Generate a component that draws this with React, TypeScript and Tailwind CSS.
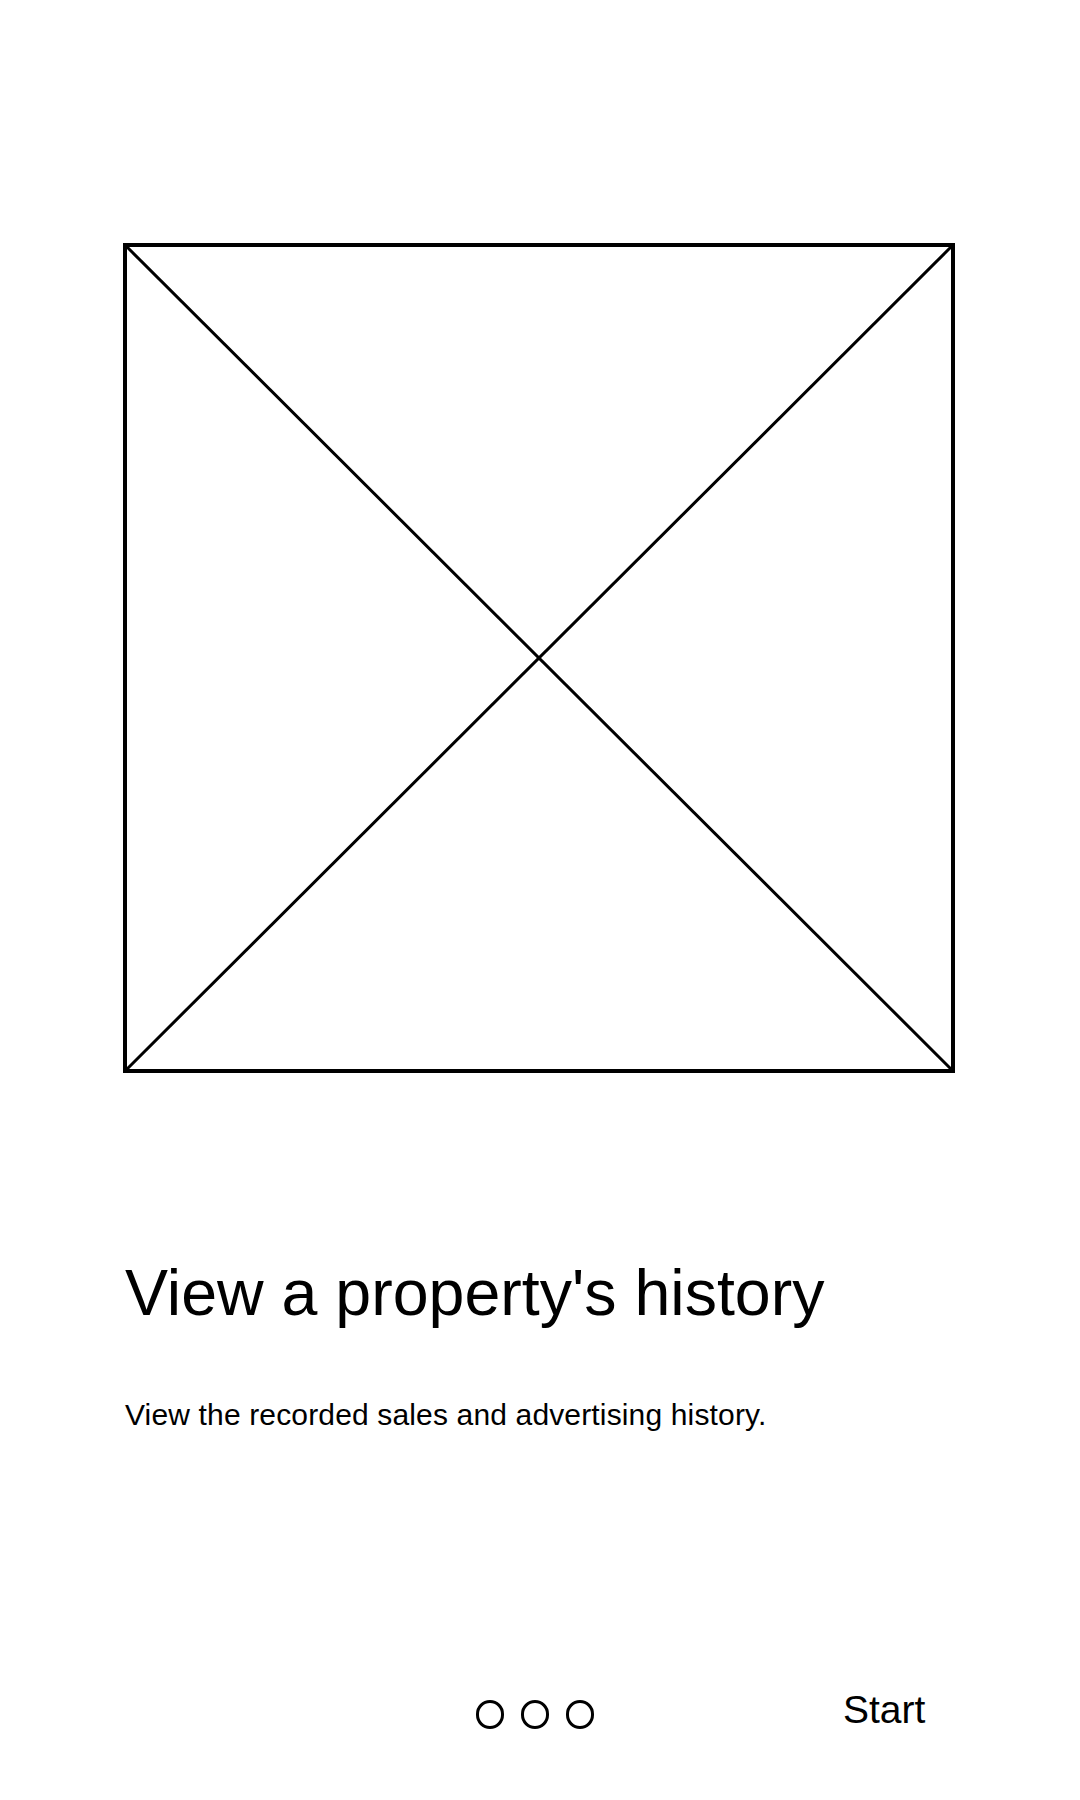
export default function App() {
  return (
    <div className="w-[1080px] h-[1800px] bg-white flex flex-col pl-[123px] pt-[243px]" style={{ fontFamily: '"Liberation Sans", Arial, sans-serif' }}>
      <div className="relative w-[832px] h-[830px] border-4 border-black">
        <svg className="absolute inset-0 w-full h-full" viewBox="0 0 824 822" preserveAspectRatio="none">
          <line x1="0" y1="0" x2="824" y2="822" stroke="black" strokeWidth="3" />
          <line x1="824" y1="0" x2="0" y2="822" stroke="black" strokeWidth="3" />
        </svg>
      </div>
      <h1 className="mt-[183px] ml-[2px] text-[64.5px] leading-[74px] text-black font-normal">View a property's history</h1>
      <p className="mt-[68px] ml-[2px] text-[30px] leading-[34px] tracking-[0.15px] text-black">View the recorded sales and advertising history.</p>
      <div className="mt-[255px] flex items-start">
        <div className="ml-[353px] mt-[13px] flex gap-[17px]">
          <div className="w-[28px] h-[29px] rounded-full border-[3px] border-black" />
          <div className="w-[28px] h-[29px] rounded-full border-[3px] border-black" />
          <div className="w-[28px] h-[29px] rounded-full border-[3px] border-black" />
        </div>
        <span className="ml-[249px] text-[39px] leading-[45px] text-black">Start</span>
      </div>
    </div>
  );
}
